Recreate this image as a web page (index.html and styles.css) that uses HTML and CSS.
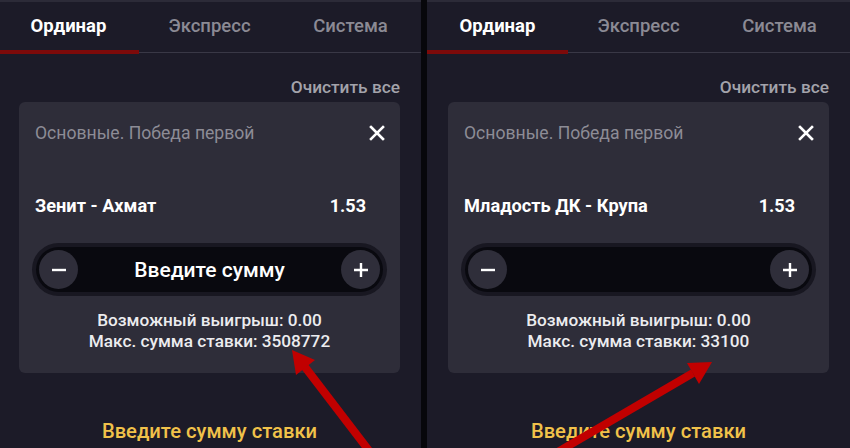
FILE: index.html
```html
<!DOCTYPE html>
<html lang="ru">
<head>
<meta charset="utf-8">
<title>Купон</title>
<link rel="stylesheet" href="styles.css">
</head>
<body>
<div class="screen">
  <section class="panel panel-left">
    <nav class="tabs">
      <div class="tab active">Ординар</div>
      <div class="tab">Экспресс</div>
      <div class="tab">Система</div>
    </nav>
    <div class="clear-row"><span class="clear">Очистить все</span></div>
    <div class="card">
      <div class="card-head">
        <span class="market">Основные. Победа первой</span>
        <svg class="close" width="16" height="16" viewBox="0 0 16 16"><path d="M2 2L14 14M14 2L2 14" stroke="#fff" stroke-width="2.6" stroke-linecap="square"/></svg>
      </div>
      <div class="match">
        <span class="teams">Зенит - Ахмат</span>
        <span class="odds">1.53</span>
      </div>
      <div class="stepper">
        <div class="stepper-inner">
          <span class="step-btn"><svg width="16" height="16" viewBox="0 0 16 16"><path d="M1 8H15" stroke="#fff" stroke-width="2.4"/></svg></span>
          <span class="amount">Введите сумму</span>
          <span class="step-btn"><svg width="16" height="16" viewBox="0 0 16 16"><path d="M1 8H15M8 1V15" stroke="#fff" stroke-width="2.4"/></svg></span>
        </div>
      </div>
      <div class="info">
        <div>Возможный выигрыш: 0.00</div>
        <div>Макс. сумма ставки: 3508772</div>
      </div>
    </div>
    <div class="hint">Введите сумму ставки</div>
  </section>
  <div class="divider"></div>
  <section class="panel">
    <nav class="tabs">
      <div class="tab active">Ординар</div>
      <div class="tab">Экспресс</div>
      <div class="tab">Система</div>
    </nav>
    <div class="clear-row"><span class="clear">Очистить все</span></div>
    <div class="card">
      <div class="card-head">
        <span class="market">Основные. Победа первой</span>
        <svg class="close" width="16" height="16" viewBox="0 0 16 16"><path d="M2 2L14 14M14 2L2 14" stroke="#fff" stroke-width="2.6" stroke-linecap="square"/></svg>
      </div>
      <div class="match">
        <span class="teams">Младость ДК - Крупа</span>
        <span class="odds">1.53</span>
      </div>
      <div class="stepper">
        <div class="stepper-inner">
          <span class="step-btn"><svg width="16" height="16" viewBox="0 0 16 16"><path d="M1 8H15" stroke="#fff" stroke-width="2.4"/></svg></span>
          <span class="amount"></span>
          <span class="step-btn"><svg width="16" height="16" viewBox="0 0 16 16"><path d="M1 8H15M8 1V15" stroke="#fff" stroke-width="2.4"/></svg></span>
        </div>
      </div>
      <div class="info">
        <div>Возможный выигрыш: 0.00</div>
        <div>Макс. сумма ставки: 33100</div>
      </div>
    </div>
    <div class="hint">Введите сумму ставки</div>
  </section>
</div>
<svg class="arrows" width="850" height="448" viewBox="0 0 850 448">
  <line x1="305" y1="367" x2="370" y2="452" stroke="#c10000" stroke-width="8"/>
  <polygon points="292,350 315,360 296,375" fill="#c10000"/>
  <line x1="693" y1="373" x2="556" y2="453" stroke="#c10000" stroke-width="8"/>
  <polygon points="712,362 687,363 699,384" fill="#c10000"/>
</svg>
</body>
</html>
```

FILE: styles.css
```css
* { box-sizing: border-box; }
html, body {
  margin: 0;
  padding: 0;
  width: 850px;
  height: 448px;
  overflow: hidden;
  background: #1c1b28;
  font-family: Roboto, "Liberation Sans", sans-serif;
}
.screen {
  display: flex;
  width: 850px;
  height: 448px;
}
.panel {
  width: 423px;
  flex: none;
  height: 448px;
  background: #1c1b28;
  border-top: 2px solid #2c2b38;
}
.panel-left { margin-left: -2px; }
.divider {
  width: 6px;
  flex: none;
  background: #07070b;
}
.tabs {
  display: flex;
  height: 51px;
  border-bottom: 1px solid #393846;
}
.tab {
  flex: 1;
  position: relative;
  text-align: center;
  font-size: 18.5px;
  font-weight: 500;
  line-height: 48px;
  color: #8b8a94;
}
.tab.active {
  color: #ffffff;
  font-weight: 700;
}
.tab.active::after {
  content: "";
  position: absolute;
  left: 0;
  right: 0;
  bottom: -2px;
  height: 4px;
  background: #7c0a0a;
}
.clear-row {
  display: flex;
  justify-content: flex-end;
  padding-right: 21px;
  margin-top: 24px;
  height: 20px;
}
.clear {
  font-size: 17.3px;
  font-weight: 500;
  line-height: 20px;
  color: #a3a3ab;
}
.card {
  margin: 5px 21px 0;
  height: 271px;
  background: #2e2d39;
  border-radius: 6px;
  padding: 20px 13px 0;
}
.card-head {
  display: flex;
  align-items: center;
  justify-content: space-between;
  height: 22px;
  padding: 0 2px 0 3px;
}
.market {
  font-size: 17.6px;
  color: #8d8c96;
  line-height: 22px;
}
.match {
  display: flex;
  justify-content: space-between;
  align-items: center;
  height: 22px;
  margin-top: 50px;
  padding: 0 21px 0 3px;
  font-size: 18.2px;
  font-weight: 700;
  color: #ffffff;
}
.odds { font-size: 18px; }
.stepper {
  margin-top: 27px;
  height: 53px;
  border-radius: 27px;
  background: #181721;
  padding: 4px;
}
.stepper-inner {
  display: flex;
  align-items: center;
  justify-content: space-between;
  height: 45px;
  border-radius: 23px;
  background: #09090f;
  padding: 0 3px;
}
.step-btn {
  width: 39px;
  height: 39px;
  border-radius: 50%;
  background: #2f2e3a;
  display: flex;
  align-items: center;
  justify-content: center;
}
.amount {
  font-size: 21px;
  font-weight: 500;
  color: #ffffff;
}
.info {
  margin-top: 14px;
  text-align: center;
  font-size: 17.2px;
  font-weight: 500;
  line-height: 21px;
  color: #ececef;
}
.hint {
  margin-top: 46px;
  text-align: center;
  font-size: 20.2px;
  font-weight: 500;
  line-height: 24px;
  color: #f1c24a;
}
.arrows {
  position: absolute;
  left: 0;
  top: 0;
  pointer-events: none;
}
```
